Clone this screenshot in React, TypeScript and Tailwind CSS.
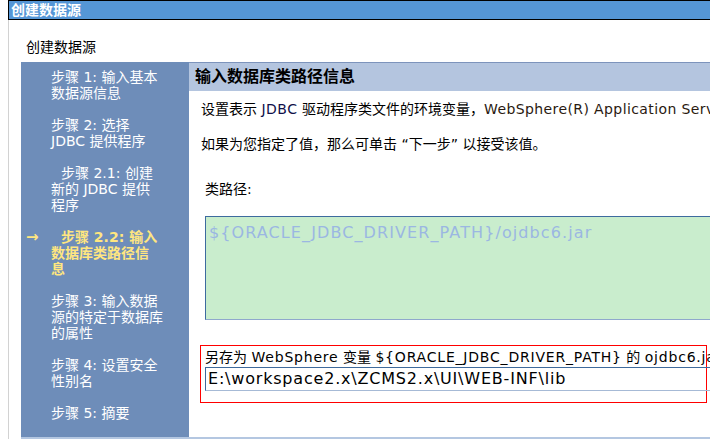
import React from 'react';

type Step = { lines: string[]; indent?: boolean; current?: boolean };

const STEPS: Step[] = [
  { lines: ['步骤 1: 输入基本', '数据源信息'] },
  { lines: ['步骤 2: 选择', 'JDBC 提供程序'] },
  { lines: ['步骤 2.1: 创建', '新的 JDBC 提供', '程序'], indent: true },
  { lines: ['步骤 2.2: 输入', '数据库类路径信', '息'], indent: true, current: true },
  { lines: ['步骤 3: 输入数据', '源的特定于数据库', '的属性'] },
  { lines: ['步骤 4: 设置安全', '性别名'] },
  { lines: ['步骤 5: 摘要'] },
];

export default function App() {
  return (
    <div className="w-[710px] h-[439px] overflow-hidden bg-white font-['DejaVu_Sans','Noto_Sans_CJK_SC',sans-serif] text-black">
      {/* 标题栏 */}
      <div className="ml-[8px] h-[20px] border border-r-0 border-black bg-[#5596d6] pl-[2px] text-[14px] font-bold leading-[18px] text-white">
        创建数据源
      </div>

      <div className="ml-[8px] h-[419px] border-l border-[#d2d2d2] pl-[12px] flex flex-col">
        <div className="h-[42px] pt-[19px] pl-[5px] text-[14px] leading-[16px]">创建数据源</div>

        <div className="flex flex-1 border-b-2 border-[#b4c7e1]">
          {/* 左侧步骤 */}
          <div className="w-[168px] shrink-0 bg-[#6e8db9] pt-[7px] pl-[30px] flex flex-col gap-[16px]">
            {STEPS.map((s, i) => (
              <div
                key={i}
                className={
                  s.current
                    ? 'relative text-[14px] leading-[16px] font-bold text-[#ffe680] whitespace-nowrap'
                    : 'text-[14px] leading-[16px] text-white whitespace-nowrap'
                }
              >
                {s.current && (
                  <span className="absolute left-[-25px] top-0 text-[15px] font-bold">→</span>
                )}
                {s.lines.map((l, j) => (
                  <div key={j} className={s.indent && j === 0 ? 'pl-[10px]' : ''}>
                    {l}
                  </div>
                ))}
              </div>
            ))}
          </div>

          {/* 右侧内容 */}
          <div className="flex-1 min-w-0 flex flex-col overflow-hidden">
            <div className="h-[29px] shrink-0 border-t border-[#7d94bc] bg-[#b4c5df] pl-[6px] text-[16px] font-bold leading-[27px] whitespace-nowrap">
              输入数据库类路径信息
            </div>

            <div className="pl-[12px] pt-[10px] text-[14px] leading-[16px] whitespace-nowrap">
              <div>
                设置表示 <span className="text-[#10104a] tracking-[0.5px]">JDBC</span> 驱动程序类文件的环境变量，
                <span className="text-[#2a1a10] tracking-[0.4px]">WebSphere(R) Application Server</span>
              </div>
              <div className="mt-[19px]">如果为您指定了值，那么可单击 “下一步” 以接受该值。</div>
              <div className="mt-[29px] pl-[4px]">类路径:</div>

              <div className="mt-[19px] ml-[4px] w-[520px] h-[104px] border-t border-l border-[#3d6b9f] border-b border-b-[#8fa8cc] bg-[#c9edcd] pl-[3px] pt-[6px] text-[16px] leading-[20px] tracking-[1.1px] text-[#9bb7e2]">
                {'${ORACLE_JDBC_DRIVER_PATH}/ojdbc6.jar'}
              </div>

              <div className="mt-[25px] -ml-[1px] w-[507px] border border-[#ff0000] pl-[4px] pt-[3px] pb-[11px]">
                <div className="leading-[17px]">
                  另存为 <span className="tracking-[0.8px]">WebSphere</span> 变量{' '}
                  <span className="tracking-[0.8px]">{'${ORACLE_JDBC_DRIVER_PATH}'}</span> 的{' '}
                  <span className="tracking-[0.8px]">ojdbc6.jar</span>
                </div>
                <div className="mt-[1px] w-[520px] h-[24px] border-t border-l border-[#3e6a9c] border-b border-b-[#a6bad6] pl-[2px] text-[16px] leading-[22px] tracking-[0.8px]">
                  {'E:\\workspace2.x\\ZCMS2.x\\UI\\WEB-INF\\lib'}
                </div>
              </div>
            </div>
          </div>
        </div>
      </div>
    </div>
  );
}
